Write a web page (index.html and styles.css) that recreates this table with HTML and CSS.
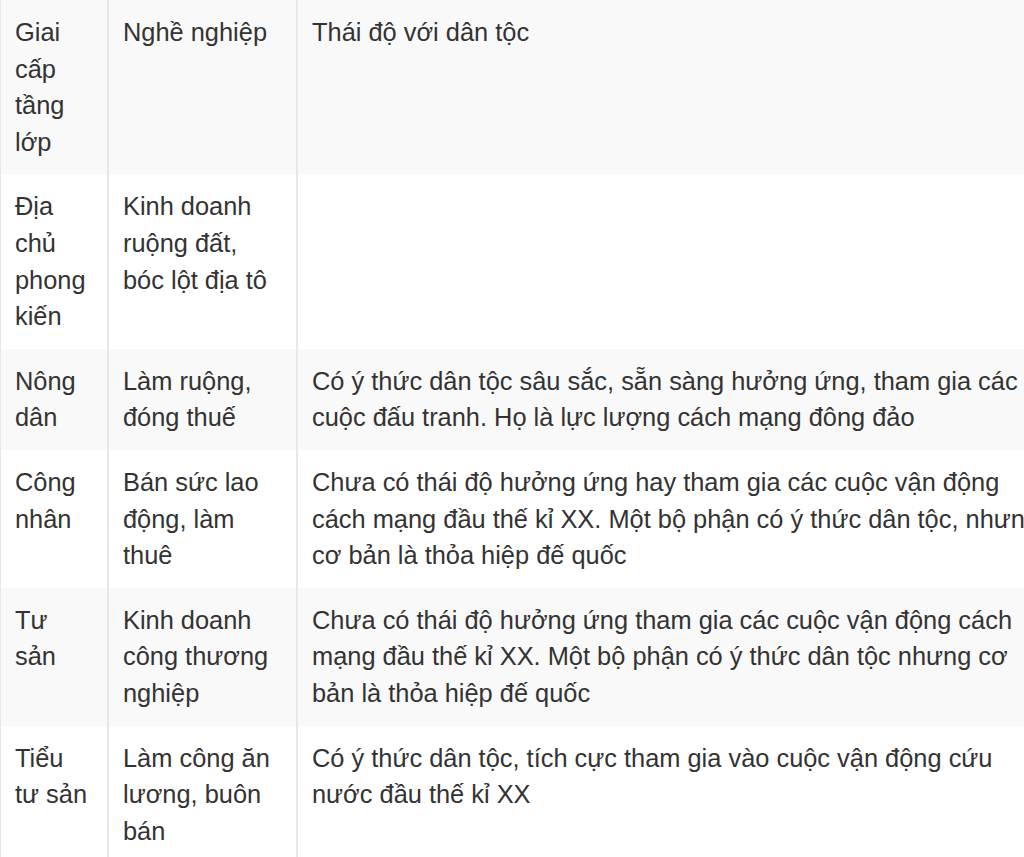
FILE: index.html
```html
<!DOCTYPE html>
<html lang="vi">
<head>
<meta charset="utf-8">
<title>Giai cấp tầng lớp</title>
<link rel="stylesheet" href="styles.css">
</head>
<body>
<div class="wrap">
<table class="grid">
  <colgroup>
    <col class="c1">
    <col class="c2">
    <col class="c3">
  </colgroup>
  <tbody>
    <tr class="odd">
      <td>Giai cấp tầng lớp</td>
      <td>Nghề nghiệp</td>
      <td>Thái độ với dân tộc</td>
    </tr>
    <tr>
      <td>Địa chủ phong kiến</td>
      <td>Kinh doanh ruộng đất, bóc lột địa tô</td>
      <td></td>
    </tr>
    <tr class="odd">
      <td>Nông dân</td>
      <td>Làm ruộng, đóng thuế</td>
      <td>Có ý thức dân tộc sâu sắc, sẵn sàng hưởng ứng, tham gia các cuộc đấu tranh. Họ là lực lượng cách mạng đông đảo</td>
    </tr>
    <tr>
      <td>Công nhân</td>
      <td>Bán sức lao động, làm thuê</td>
      <td>Chưa có thái độ hưởng ứng hay tham gia các cuộc vận động cách mạng đầu thế kỉ XX. Một bộ phận có ý thức dân tộc, nhưng cơ bản là thỏa hiệp đế quốc</td>
    </tr>
    <tr class="odd">
      <td>Tư sản</td>
      <td>Kinh doanh công thương nghiệp</td>
      <td>Chưa có thái độ hưởng ứng tham gia các cuộc vận động cách mạng đầu thế kỉ XX. Một bộ phận có ý thức dân tộc nhưng cơ bản là thỏa hiệp đế quốc</td>
    </tr>
    <tr>
      <td>Tiểu tư sản</td>
      <td>Làm công ăn lương, buôn bán</td>
      <td>Có ý thức dân tộc, tích cực tham gia vào cuộc vận động cứu nước đầu thế kỉ XX</td>
    </tr>
  </tbody>
</table>
</div>
</body>
</html>
```

FILE: styles.css
```css
html, body {
  margin: 0;
  padding: 0;
  background: #ffffff;
  overflow: hidden;
}

.wrap {
  width: 1024px;
  height: 857px;
  overflow: hidden;
}

.grid {
  table-layout: fixed;
  width: 1061px;
  border-collapse: separate;
  border-spacing: 0;
  font-family: "Liberation Sans", Arial, sans-serif;
  font-size: 25.4px;
  line-height: 36.6px;
  color: #333333;
}

.c1 { width: 107px; }
.c2 { width: 189px; }
.c3 { width: 765px; }

.grid td {
  vertical-align: top;
  padding: 14px 13px 14px 14px;
  border-left: 2px solid #e8e8e8;
}

.grid td:first-child {
  border-left-width: 1px;
}

.grid tr.odd td {
  background: #f9f9f9;
}
```
